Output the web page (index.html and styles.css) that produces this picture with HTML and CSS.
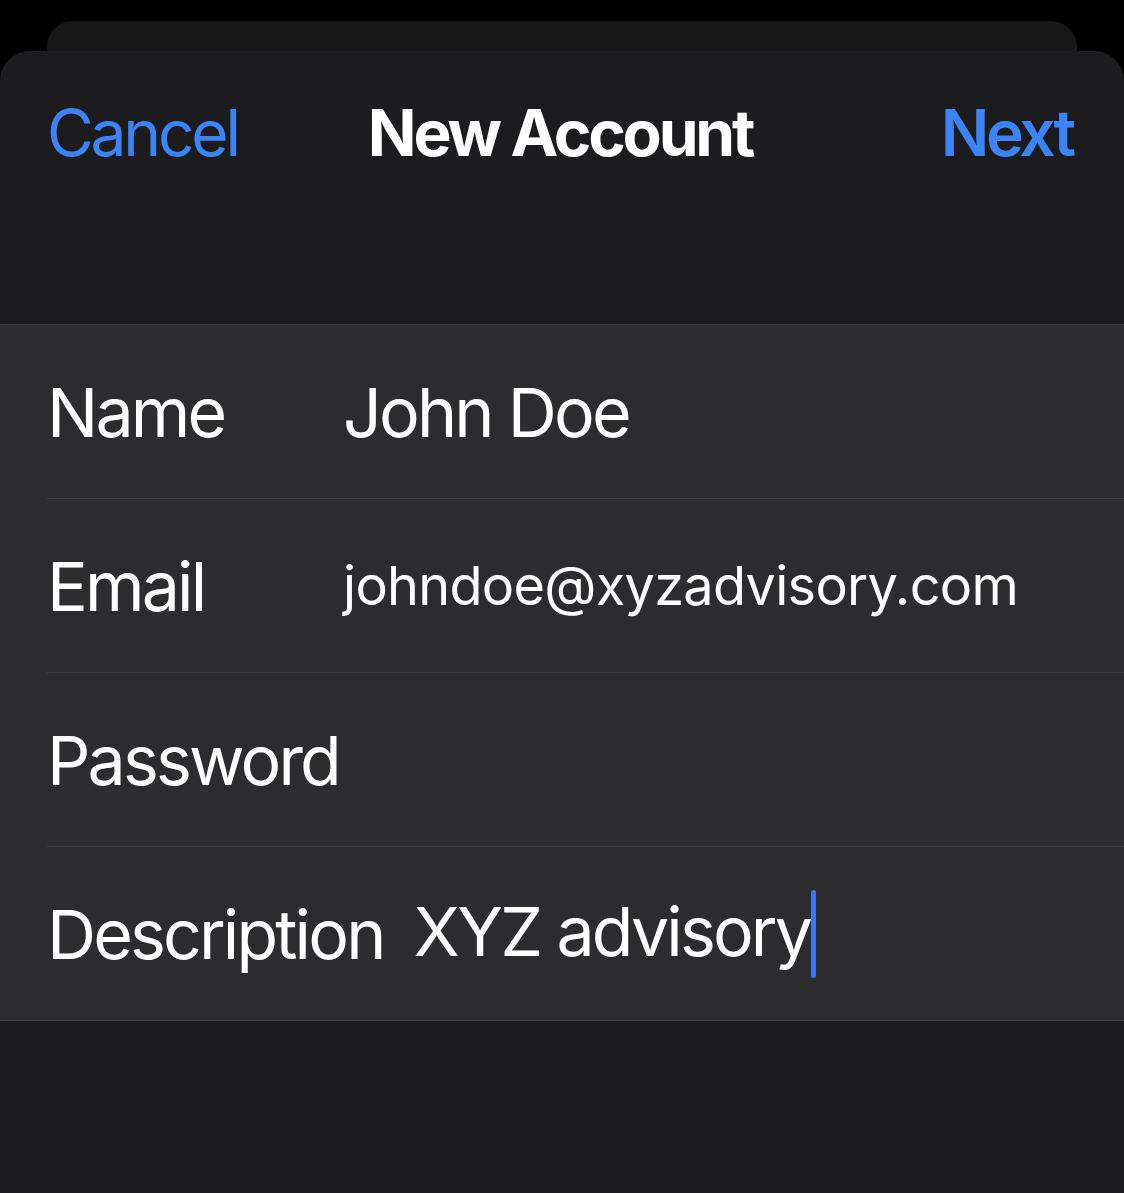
FILE: index.html
```html
<!DOCTYPE html>
<html>
<head>
  <title>New Account</title>
  <link rel="stylesheet" href="styles.css">
</head>
<body>
  <div class="back-card"></div>
  <div class="sheet">
    <div class="nav">
      <span class="nav-btn">Cancel</span>
      <span class="nav-title">New Account</span>
      <span class="nav-btn nav-next">Next</span>
    </div>

    <div class="form-list">
      <div class="row">
        <span class="label">Name</span>
        <span class="value">John Doe</span>
      </div>
      <div class="row">
        <span class="label">Email</span>
        <span class="value value-small">johndoe@xyzadvisory.com</span>
      </div>
      <div class="row">
        <span class="label">Password</span>
        <span class="value"></span>
      </div>
      <div class="row">
        <span class="label">Description</span>
        <span class="value">XYZ advisory<span class="caret"></span></span>
      </div>
    </div>
  </div>
</body>
</html>
```

FILE: styles.css
```css
body {
  margin: 0;
  padding: 0;
  background-color: #000;
  font-family: Inter, "Noto Sans", sans-serif;
  color: #fff;
}
.back-card {
  height: 30px;
  margin: 21px 47px 0;
  background-color: #171717;
  border-radius: 26px 26px 0 0;
}
.sheet {
  min-height: 1142px;
  background-color: #1c1c1e;
  border-radius: 30px 30px 0 0;
}
.nav {
  display: grid;
  grid-template-columns: 1fr auto 1fr;
  align-items: center;
  height: 163px;
  padding: 0 51px 110px 47px;
  font-size: 64px;
  letter-spacing: -0.05em;
}
.nav-btn {
  color: #3b84f6;
}
.nav-next {
  text-align: right;
  font-weight: 600;
}
.nav-title {
  font-weight: 700;
}
.form-list {
  background-color: #2c2c2e;
  border-top: 1px solid #3d3d40;
  border-bottom: 1px solid #3d3d40;
}
.row {
  display: flex;
  align-items: center;
  height: 173px;
  margin-left: 47px;
  border-bottom: 1px solid #3d3d40;
  font-size: 68px;
  letter-spacing: -0.042em;
}
.row:last-child {
  border-bottom: none;
}
.label {
  min-width: 266px;
  margin-right: 30px;
}
.value-small {
  font-size: 54px;
  letter-spacing: -0.7px;
}
.caret {
  display: inline-block;
  width: 5px;
  height: 88px;
  margin-left: 1px;
  vertical-align: -22px;
  background-color: #3b78f0;
  border-radius: 3px;
}
```
